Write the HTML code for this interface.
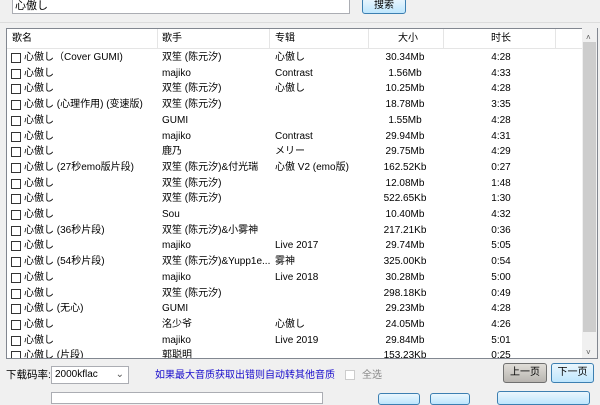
<!DOCTYPE html>
<html><head><meta charset="utf-8"><style>
*{margin:0;padding:0;box-sizing:border-box}
body{width:600px;height:400px;overflow:hidden;background:#f0f0f0;font-family:"Liberation Sans","Noto Sans CJK SC",sans-serif;font-size:10px;line-height:14px;color:#000;position:relative}
.abs{position:absolute}
.inp{background:#fff;border:1px solid #abadb3}
.btn{border:1px solid #3c7fb1;border-radius:3px;background:linear-gradient(#eaf6fd,#bee6fd);text-align:center}
.list{left:6px;top:28px;width:592px;height:331px;background:#fff;border:1px solid #828790;overflow:hidden}
.hdr{position:absolute;top:0;left:0;width:576px;height:20px;border-bottom:1px solid #e5e5e5}
.hdr span{position:absolute;top:0;line-height:20px;height:20px}
.sep{position:absolute;top:0;width:1px;height:20px;background:#e5e5e5}
.row{position:absolute;left:0;height:16px;width:576px;white-space:nowrap}
.row span{position:absolute;top:0;height:16px;line-height:16px}
.cb{position:absolute;left:4px;top:3px;width:10px;height:10px;border:1px solid #333;background:#fff}
.c1{left:17px}.c2{left:155px}.c3{left:268px}.c4{left:360px;width:76px;text-align:center}.c5{left:454px;width:80px;text-align:center}
.sb{left:582px;top:28px;width:15px;height:330px;background:#f0f0f0}
</style></head><body>
<div class="abs inp" style="left:12px;top:-2px;width:338px;height:16px;padding-left:2px;font-size:11px;line-height:14px">心傲し</div>
<div class="abs btn" style="left:362px;top:-2px;width:44px;height:16px;line-height:14px">搜索</div>
<div class="abs" style="left:0;top:22px;width:600px;height:1px;background:#dcdcdc"></div>
<div class="abs list">
<div class="hdr"><span style="left:5px">歌名</span><span style="left:155px">歌手</span><span style="left:268px">专辑</span><span style="left:391px">大小</span><span style="left:484px">时长</span>
<div class="sep" style="left:150px"></div><div class="sep" style="left:262px"></div><div class="sep" style="left:361px"></div><div class="sep" style="left:436px"></div><div class="sep" style="left:548px"></div></div>
<div id="rows"></div>
</div>
<div class="abs sb"><div class="abs" style="left:4px;top:3px;font-size:8px;color:#555">˄</div><div class="abs" style="left:1px;top:14px;width:13px;height:290px;background:#cdcdcd"></div><div class="abs" style="left:4px;top:318px;font-size:8px;color:#555">˅</div></div>
<div class="abs" style="left:6px;top:368px;font-size:10.5px;white-space:nowrap;z-index:2">下载码率:</div>
<div class="abs inp" style="left:51px;top:366px;width:78px;height:18px;padding-left:3px;line-height:16px">2000kflac<span style="position:absolute;right:4px;color:#555">⌄</span></div>
<div class="abs" style="left:155px;top:369px;color:#1a0dcc">如果最大音质获取出错则自动转其他音质</div>
<div class="abs" style="left:345px;top:370px;width:10px;height:10px;border:1px solid #ccc;background:#fff"></div>
<div class="abs" style="left:362px;top:369px;color:#888">全选</div>
<div class="abs" style="left:503px;top:363px;width:44px;height:20px;border:1px solid #707070;border-radius:3px;background:linear-gradient(#e0ddd8,#b8b5b0);text-align:center;line-height:18px">上一页</div>
<div class="abs btn" style="left:551px;top:363px;width:43px;height:20px;line-height:18px">下一页</div>
<div class="abs inp" style="left:51px;top:392px;width:272px;height:12px"></div>
<div class="abs btn" style="left:378px;top:393px;width:42px;height:12px"></div>
<div class="abs btn" style="left:430px;top:393px;width:40px;height:12px"></div>
<div class="abs btn" style="left:497px;top:391px;width:93px;height:14px"></div>
<script>
var d=[["心傲し（Cover GUMI)","双笙 (陈元汐)","心傲し","30.34Mb","4:28"],["心傲し","majiko","Contrast","1.56Mb","4:33"],["心傲し","双笙 (陈元汐)","心傲し","10.25Mb","4:28"],["心傲し (心理作用) (变速版)","双笙 (陈元汐)","","18.78Mb","3:35"],["心傲し","GUMI","","1.55Mb","4:28"],["心傲し","majiko","Contrast","29.94Mb","4:31"],["心傲し","鹿乃","メリー","29.75Mb","4:29"],["心傲し (27秒emo版片段)","双笙 (陈元汐)&付光瑞","心傲 V2 (emo版)","162.52Kb","0:27"],["心傲し","双笙 (陈元汐)","","12.08Mb","1:48"],["心傲し","双笙 (陈元汐)","","522.65Kb","1:30"],["心傲し","Sou","","10.40Mb","4:32"],["心傲し (36秒片段)","双笙 (陈元汐)&小雾神","","217.21Kb","0:36"],["心傲し","majiko","Live 2017","29.74Mb","5:05"],["心傲し (54秒片段)","双笙 (陈元汐)&Yupp1e...","雾神","325.00Kb","0:54"],["心傲し","majiko","Live 2018","30.28Mb","5:00"],["心傲し","双笙 (陈元汐)","","298.18Kb","0:49"],["心傲し (无心)","GUMI","","29.23Mb","4:28"],["心傲し","洺少爷","心傲し","24.05Mb","4:26"],["心傲し","majiko","Live 2019","29.84Mb","5:01"],["心傲し (片段)","郭聪明","","153.23Kb","0:25"]];
var h="";d.forEach(function(r,i){h+='<div class="row" style="top:'+Math.round(21+i*15.7)+'px"><div class="cb"></div><span class="c1">'+r[0]+'</span><span class="c2">'+r[1]+'</span><span class="c3">'+r[2]+'</span><span class="c4">'+r[3]+'</span><span class="c5">'+r[4]+'</span></div>';});
document.getElementById("rows").innerHTML=h;
</script>
</body></html>
